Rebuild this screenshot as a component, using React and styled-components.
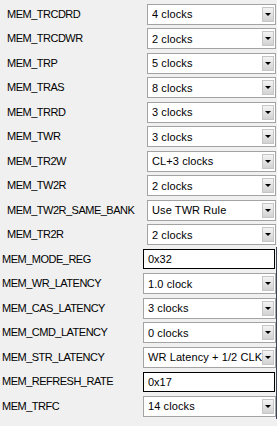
import React from 'react';
import styled, { createGlobalStyle } from 'styled-components';

const GlobalStyle = createGlobalStyle`
  html, body {
    margin: 0;
    padding: 0;
    background: #f0f0f0;
  }
  body {
    font-family: 'Liberation Sans', Arial, sans-serif;
    font-size: 11px;
    color: #000;
  }
`;

const Page = styled.div`
  padding-top: 2px;
`;

// Bloco de linhas (parte de cima e parte de baixo têm recuos diferentes)
const Panel = styled.div`
  display: grid;
  grid-template-columns: ${({ $labelWidth }) => $labelWidth}px 1fr;
  grid-auto-rows: 24.5px;
  align-items: center;
  padding-left: ${({ $left }) => $left}px;
  padding-right: ${({ $right }) => $right}px;
  border-right: ${({ $edge }) => ($edge ? '1px solid #3c4455' : 'none')};
  width: 277px;
  box-sizing: border-box;
`;

const Label = styled.div`
  white-space: nowrap;
  line-height: 13px;
  letter-spacing: -0.5px;
`;

// Combo box
const Combo = styled.div`
  display: flex;
  align-items: center;
  height: 21px;
  box-sizing: border-box;
  border: 1px solid #a3a3a3;
  background: #fff;
  padding: 0 1px 0 4px;
`;

const ComboText = styled.span`
  flex: 1;
  overflow: hidden;
  white-space: nowrap;
  letter-spacing: 0.1px;
`;

const ArrowButton = styled.div`
  flex: none;
  width: 12px;
  height: 15px;
  box-sizing: border-box;
  border: 1px solid #c6c6c6;
  background: linear-gradient(#f4f4f4, #d2d2d2);
  display: flex;
  align-items: center;
  justify-content: center;

  &:after {
    content: '';
    border-left: 3px solid transparent;
    border-right: 3px solid transparent;
    border-top: 3px solid #000;
  }
`;

// Campo de texto
const TextField = styled.div`
  height: 20px;
  box-sizing: border-box;
  border: 1px solid #000;
  background: #fff;
  padding-left: 4px;
  display: flex;
  align-items: center;
  margin-right: 1px;
`;

const topRows = [
  ['MEM_TRCDRD', '4 clocks'],
  ['MEM_TRCDWR', '2 clocks'],
  ['MEM_TRP', '5 clocks'],
  ['MEM_TRAS', '8 clocks'],
  ['MEM_TRRD', '3 clocks'],
  ['MEM_TWR', '3 clocks'],
  ['MEM_TR2W', 'CL+3 clocks'],
  ['MEM_TW2R', '2 clocks'],
  ['MEM_TW2R_SAME_BANK', 'Use TWR Rule'],
  ['MEM_TR2R', '2 clocks'],
];

const bottomRows = [
  ['MEM_MODE_REG', '0x32', 'text'],
  ['MEM_WR_LATENCY', '1.0 clock'],
  ['MEM_CAS_LATENCY', '3 clocks'],
  ['MEM_CMD_LATENCY', '0 clocks'],
  ['MEM_STR_LATENCY', 'WR Latency + 1/2 CLK'],
  ['MEM_REFRESH_RATE', '0x17', 'text'],
  ['MEM_TRFC', '14 clocks'],
];

function Field({ value, kind }) {
  if (kind === 'text') {
    return <TextField>{value}</TextField>;
  }
  return (
    <Combo>
      <ComboText>{value}</ComboText>
      <ArrowButton />
    </Combo>
  );
}

export default function App() {
  return (
    <>
      <GlobalStyle />
      <Page>
        <Panel $labelWidth={140} $left={7} $right={1}>
          {topRows.map(([label, value]) => (
            <React.Fragment key={label}>
              <Label>{label}</Label>
              <Field value={value} />
            </React.Fragment>
          ))}
        </Panel>
        <Panel $labelWidth={141} $left={2} $right={2} $edge>
          {bottomRows.map(([label, value, kind]) => (
            <React.Fragment key={label}>
              <Label>{label}</Label>
              <Field value={value} kind={kind} />
            </React.Fragment>
          ))}
        </Panel>
      </Page>
    </>
  );
}
